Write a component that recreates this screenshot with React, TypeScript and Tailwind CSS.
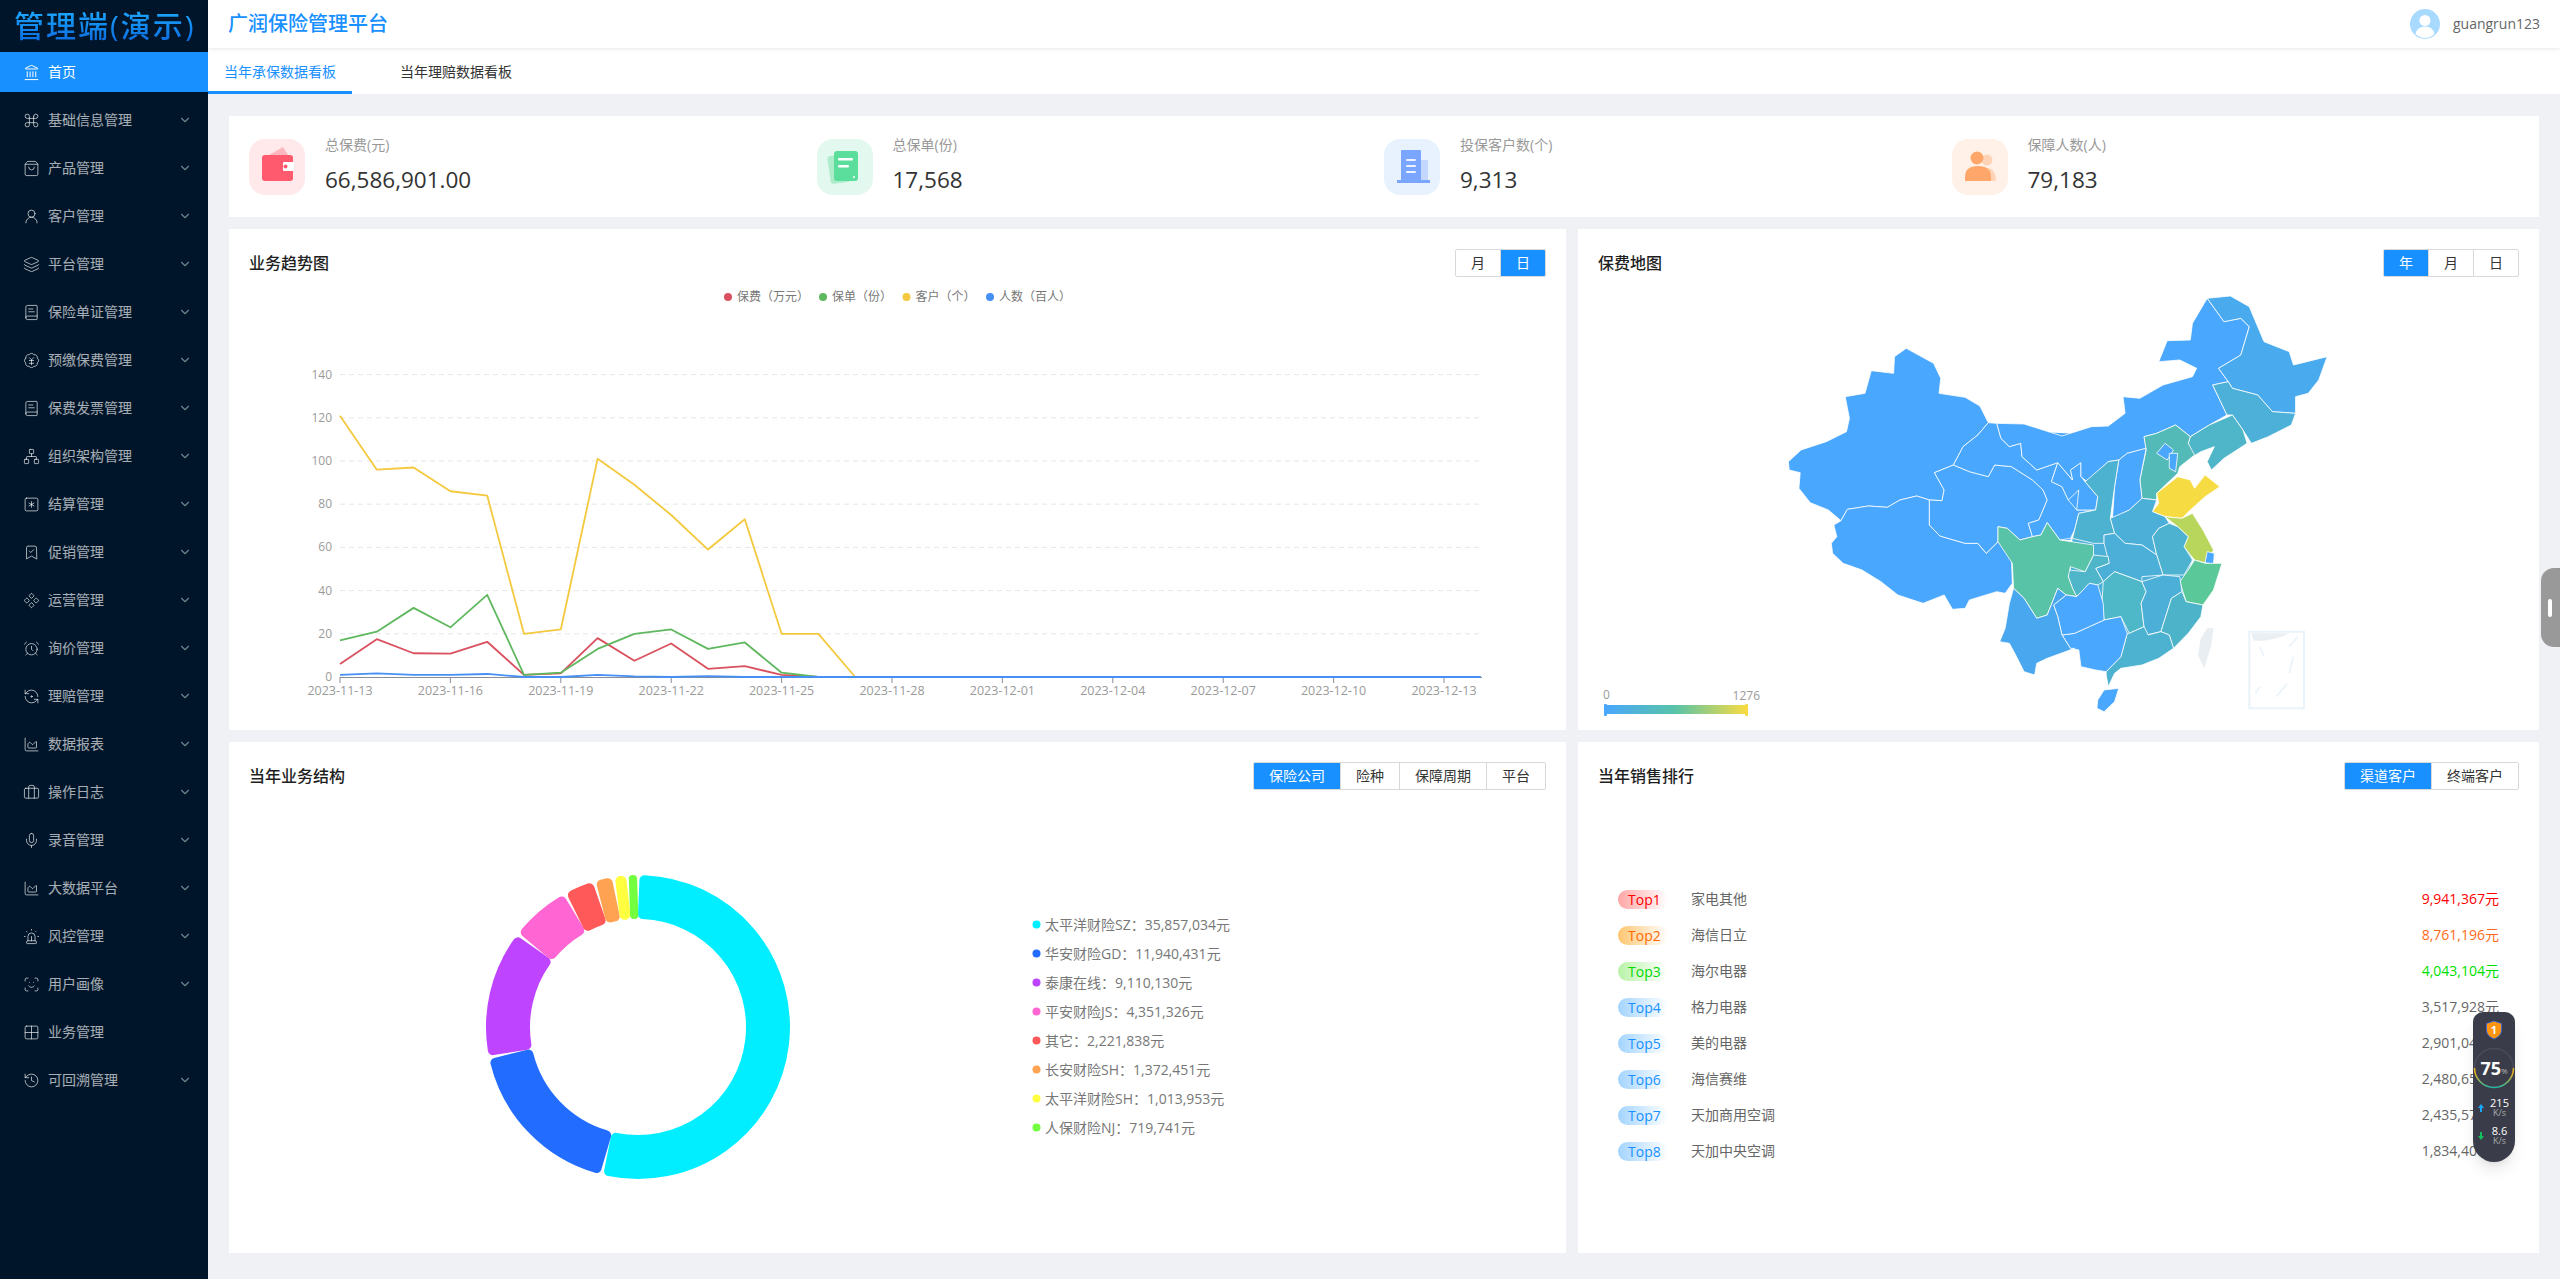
import React from 'react';
import {
  Landmark, Command, ShoppingBag, UserRound, Layers, BookText, BadgeJapaneseYen, Network,
  SquareAsterisk, BookmarkCheck, Component, AlarmClock, RefreshCcwDot, ChartArea, Briefcase,
  Mic, Siren, ScanFace, Grid2x2, History, ChevronDown,
} from 'lucide-react';

const menus = [
  { icon: Command, label: '基础信息管理' },
  { icon: ShoppingBag, label: '产品管理' },
  { icon: UserRound, label: '客户管理' },
  { icon: Layers, label: '平台管理' },
  { icon: BookText, label: '保险单证管理' },
  { icon: BadgeJapaneseYen, label: '预缴保费管理' },
  { icon: BookText, label: '保费发票管理' },
  { icon: Network, label: '组织架构管理' },
  { icon: SquareAsterisk, label: '结算管理' },
  { icon: BookmarkCheck, label: '促销管理' },
  { icon: Component, label: '运营管理' },
  { icon: AlarmClock, label: '询价管理' },
  { icon: RefreshCcwDot, label: '理赔管理' },
  { icon: ChartArea, label: '数据报表' },
  { icon: Briefcase, label: '操作日志' },
  { icon: Mic, label: '录音管理' },
  { icon: ChartArea, label: '大数据平台' },
  { icon: Siren, label: '风控管理' },
  { icon: ScanFace, label: '用户画像' },
  { icon: Grid2x2, label: '业务管理', noArrow: true },
  { icon: History, label: '可回溯管理' },
];

const Sidebar = () => (
  <aside className="w-[208px] shrink-0 bg-[#001529] flex flex-col">
    <div className="h-[52px] pl-[14px] flex items-center">
      <span className="text-[30px] leading-none font-medium tracking-[2px] whitespace-nowrap bg-linear-to-b from-[#1ea7ff] to-[#0f6de0] bg-clip-text text-transparent">
        管理端(演示)
      </span>
    </div>
    <div className="h-10 mb-2 bg-[#1890ff] text-white flex items-center pl-[23px] text-sm">
      <Landmark size={17} strokeWidth={1.4} className="mr-2" />
      首页
    </div>
    {menus.map((m) => {
      const Icon = m.icon;
      return (
        <div key={m.label} className="h-10 mb-2 shrink-0 flex items-center pl-[23px] pr-4 text-sm text-white/65">
          <Icon size={17} strokeWidth={1.4} className="mr-2" />
          <span className="flex-1">{m.label}</span>
          {!m.noArrow && <ChevronDown size={14} strokeWidth={2} className="opacity-70" />}
        </div>
      );
    })}
  </aside>
);

const Wallet = () => (
  <svg width="56" height="56" viewBox="0 0 56 56">
    <path d="M20 16 L34 8 L39 16 Z" fill="#ffb7bf" />
    <rect x="13" y="16" width="31" height="26" rx="3" fill="#ff5a6e" />
    <rect x="34" y="23" width="11" height="9" rx="1" fill="#fff" />
    <circle cx="36.5" cy="27.5" r="2" fill="#ff5a6e" />
  </svg>
);
const Policy = () => (
  <svg width="56" height="56" viewBox="0 0 56 56">
    <rect x="12" y="16" width="20" height="28" rx="3" fill="#aeeccb" transform="rotate(-8 22 30)" />
    <rect x="17" y="12" width="24" height="30" rx="3" fill="#5bdd9c" />
    <rect x="21" y="19" width="15" height="2.5" rx="1" fill="#fff" />
    <rect x="21" y="26" width="11" height="2.5" rx="1" fill="#fff" />
    <circle cx="37" cy="38" r="1" fill="#fff" />
  </svg>
);
const Building = () => (
  <svg width="56" height="56" viewBox="0 0 56 56">
    <rect x="37" y="21" width="7" height="21" fill="#c4d8ff" />
    <rect x="17" y="11" width="20" height="31" rx="1" fill="#7aa6ff" />
    <rect x="13" y="41" width="33" height="3" fill="#7aa6ff" />
    <rect x="22" y="20" width="10" height="2" rx="1" fill="#eef4ff" />
    <rect x="22" y="26" width="10" height="2" rx="1" fill="#eef4ff" />
    <rect x="22" y="32" width="10" height="2" rx="1" fill="#eef4ff" />
  </svg>
);
const People = () => (
  <svg width="56" height="56" viewBox="0 0 56 56">
    <circle cx="35" cy="21" r="5.5" fill="#ffd3b5" />
    <path d="M30 29 H37 Q44 31 44 42 H30 Z" fill="#ffd3b5" />
    <circle cx="25" cy="19" r="6.5" fill="#ffa76b" />
    <path d="M13 42 V38 Q13 27 26 27 Q39 27 39 38 V42 Z" fill="#ffa76b" />
  </svg>
);

const stats = [
  { icon: <Wallet />, bg: 'bg-[#ffe9ea]', label: '总保费(元)', value: '66,586,901.00' },
  { icon: <Policy />, bg: 'bg-[#e3f8ee]', label: '总保单(份)', value: '17,568' },
  { icon: <Building />, bg: 'bg-[#e8f2ff]', label: '投保客户数(个)', value: '9,313' },
  { icon: <People />, bg: 'bg-[#fff1e8]', label: '保障人数(人)', value: '79,183' },
];

const Buttons = ({ items, active }: { items: string[]; active: number }) => (
  <div className="flex h-7 text-sm">
    {items.map((t, i) => (
      <div
        key={t}
        className={
          'h-7 min-w-[45px] px-[15px] flex items-center justify-center border border-[#d9d9d9] -ml-px first:ml-0 first:rounded-l-[2px] last:rounded-r-[2px] ' +
          (i === active ? 'bg-[#1890ff] border-[#1890ff] text-white' : 'bg-white text-[#333]')
        }
      >
        {t}
      </div>
    ))}
  </div>
);

const Card = ({ title, right, children }: { title: string; right: React.ReactNode; children: React.ReactNode }) => (
  <section className="bg-white flex flex-col min-h-0">
    <div className="h-[50px] shrink-0 pt-5 pl-5 pr-5 flex justify-between">
      <h3 className="h-7 leading-7 text-base font-medium text-[#1f1f1f]">{title}</h3>
      {right}
    </div>
    {children}
  </section>
);

const axisY = (v: number) => 677 - v * 2.16;
const axisX = (i: number) => 340 + i * 36.8;
const pad = (a: number[]) => [...a, ...Array(32 - a.length).fill(0)];
const series = [
  { color: '#d9515e', data: pad([6, 17.5, 11, 10.8, 16.3, 1, 1.7, 18, 7.5, 15.5, 3.8, 5, 1]) },
  { color: '#5fb85f', data: pad([17, 21, 32, 23, 38, 1, 2, 13, 20, 22, 13, 16, 2]) },
  { color: '#f4c93f', data: pad([121, 96, 97, 86, 84, 20, 22, 101, 89, 75, 59, 73, 20, 20]) },
  { color: '#4690f5', data: pad([1, 1.7, 1, 1, 1.4, 0, 0, 1, 0.3, 0, 0.4, 0]) },
];
const xLabels = ['2023-11-13', '2023-11-16', '2023-11-19', '2023-11-22', '2023-11-25', '2023-11-28', '2023-12-01', '2023-12-04', '2023-12-07', '2023-12-10', '2023-12-13'];
const legend = [
  { c: '#d9515e', t: '保费（万元）', dot: 728 },
  { c: '#5fb85f', t: '保单（份）', dot: 823 },
  { c: '#f4c93f', t: '客户（个）', dot: 906.5 },
  { c: '#4690f5', t: '人数（百人）', dot: 990 },
];

const TrendChart = () => (
  <svg viewBox="229 279 1337 451" className="block w-[1337px] h-[451px]" fontFamily="Open Sans, Noto Sans CJK SC, sans-serif">
    {legend.map((l) => (
      <g key={l.t}>
        <circle cx={l.dot} cy={297} r={4} fill={l.c} />
        <text x={l.dot + 9} y={301} fontSize={12} fill="#777">{l.t}</text>
      </g>
    ))}
    {[0, 20, 40, 60, 80, 100, 120, 140].map((v) => (
      <g key={v}>
        {v > 0 && <line x1={340} x2={1482} y1={axisY(v)} y2={axisY(v)} stroke="#e3e6ec" strokeDasharray="5 4" />}
        <text x={332} y={axisY(v) + 4} textAnchor="end" fontSize={12} fill="#9a9a9a">{v}</text>
      </g>
    ))}
    <line x1={340} x2={1482} y1={677.5} y2={677.5} stroke="#8a8d96" />
    {xLabels.map((t, i) => (
      <g key={t}>
        <line x1={axisX(i * 3)} x2={axisX(i * 3)} y1={677} y2={683} stroke="#8a8d96" />
        <text x={axisX(i * 3)} y={695} textAnchor="middle" fontSize={12.5} fill="#9a9a9a">{t}</text>
      </g>
    ))}
    {series.map((s) => (
      <polyline
        key={s.color}
        fill="none"
        stroke={s.color}
        strokeWidth={1.8}
        strokeLinejoin="round"
        points={s.data.map((v, i) => `${axisX(i)},${axisY(v)}`).join(' ')}
      />
    ))}
  </svg>
);

// base fills first so the hand-traced provinces leave no holes between them
const mapBase: { c: string; p: string }[] = [
  { c: '#49a7fd', p: '610,560 915,610 945,650 900,700 880,780 855,780 790,770 700,760 560,640' },
  { c: '#49a7fd', p: '700,450 1050,470 1050,520 980,560 905,600 850,560 760,500' },
  { c: '#4cb0d8', p: '885,775 975,715 1050,660 1085,700 1140,760 1170,840 1150,900 1150,960 1100,1060 1000,1150 950,1165 900,1100 860,1060 850,960 880,880' },
];

const provinces: { c: string; p: string }[] = [
  { c: '#49a7fd', p: '210,545 240,510 300,485 348,455 355,415 345,350 392,340 407,272 460,280 462,230 490,205 555,250 572,295 568,340 630,352 665,378 685,428 660,465 625,500 602,555 557,578 580,630 575,662 545,660 515,648 475,660 445,682 400,678 350,688 335,722 305,690 262,668 235,625 238,578 212,570' },
  { c: '#49a7fd', p: '335,722 350,688 400,678 445,682 475,660 515,648 545,660 545,735 570,768 630,790 660,790 680,820 708,785 740,830 742,910 725,940 705,935 640,960 630,985 600,988 580,945 530,970 470,945 430,905 385,870 340,850 315,820 312,790 325,770 318,735' },
  { c: '#49a7fd', p: '557,578 602,555 640,575 685,590 700,555 740,560 790,600 815,630 825,660 805,720 780,730 790,770 760,780 730,745 708,740 708,785 680,820 660,790 630,790 570,768 545,735 545,660 575,662 580,630' },
  { c: '#49a7fd', p: '602,555 625,500 660,465 685,428 705,430 715,475 735,500 762,490 765,530 800,570 850,548 835,605 860,620 875,660 895,690 940,690 900,700 890,750 880,775 855,780 825,728 810,765 790,770 780,730 805,720 825,660 815,630 790,600 740,560 700,555 685,590 640,575' },
  { c: '#49a7fd', p: '835,605 850,548 885,600 880,570 905,548 905,590 915,605 945,650 940,690 895,690 900,630 875,660 860,620' },
  { c: '#49a7fd', p: '705,430 770,432 860,468 930,440 970,438 1010,400 1005,350 1045,355 1100,315 1170,290 1180,265 1140,240 1090,245 1110,182 1165,180 1170,130 1205,55 1245,125 1285,115 1305,140 1285,225 1232,265 1255,305 1218,315 1252,405 1210,435 1165,470 1130,435 1085,460 1055,470 1060,505 1015,520 995,540 970,545 920,605 905,590 905,548 880,570 885,600 850,548 800,570 765,530 762,490 735,500 715,475' },
  { c: '#49aaee', p: '1205,55 1260,48 1305,80 1340,185 1400,215 1410,255 1490,230 1470,300 1445,340 1415,350 1415,400 1360,395 1325,345 1265,325 1255,305 1232,265 1285,225 1305,140 1285,115 1245,125' },
  { c: '#4cb0d8', p: '1218,315 1255,305 1265,325 1325,345 1360,395 1415,400 1405,435 1350,470 1310,490 1290,450 1265,405 1252,405' },
  { c: '#4fb5c8', p: '1165,470 1210,435 1265,405 1290,450 1300,490 1245,535 1215,570 1205,545 1222,500 1190,515 1170,530 1160,490' },
  { c: '#53bab8', p: '1055,470 1085,460 1130,435 1165,470 1160,490 1175,525 1140,560 1135,580 1085,640 1085,660 1050,655 1045,600 1060,510' },
  { c: '#49a7fd', p: '1085,520 1105,490 1125,510 1110,540' },
  { c: '#49a7fd', p: '1115,520 1135,520 1130,575 1115,565' },
  { c: '#49a7fd', p: '1060,505 1045,600 1050,655 1020,690 980,715 985,620 995,540 1015,520' },
  { c: '#4db2cf', p: '970,545 995,540 985,620 975,715 985,760 960,765 960,790 935,790 885,775 900,700 940,690 945,650 915,605' },
  { c: '#f7db43', p: '1085,640 1135,590 1165,600 1175,625 1200,585 1235,620 1200,650 1165,690 1145,715 1105,710 1075,695 1090,670' },
  { c: '#4cafd8', p: '1050,655 1085,660 1075,695 1105,710 1115,730 1090,745 1075,770 1085,825 1050,795 1010,790 985,760 975,715 1020,690' },
  { c: '#b9d65c', p: '1105,710 1145,715 1170,700 1195,750 1220,810 1205,850 1175,840 1150,800 1160,770 1135,740' },
  { c: '#49a7fd', p: '1205,815 1222,820 1220,852 1200,848' },
  { c: '#4db2cf', p: '1115,730 1135,740 1160,770 1150,800 1170,840 1150,885 1100,885 1085,825 1075,770 1090,745' },
  { c: '#5ac898', p: '1175,840 1200,850 1240,850 1220,930 1195,975 1155,965 1140,905 1160,870' },
  { c: '#4cafd8', p: '960,765 985,760 1010,790 1050,795 1085,825 1100,885 1050,890 1050,905 985,875 958,905 940,865 972,850 960,790' },
  { c: '#4fb5c8', p: '875,870 915,875 935,825 970,830 972,850 940,865 958,905 945,915 925,910 895,950 885,925 875,890' },
  { c: '#59c3a7', p: '708,740 730,745 760,780 790,770 810,765 825,728 855,780 935,795 935,825 915,875 880,860 875,890 885,925 895,950 870,945 850,925 825,1005 800,1015 770,955 745,925 742,850 708,785' },
  { c: '#4fb8c8', p: '958,905 985,875 1050,905 1060,935 1048,970 1055,1040 1020,1060 1000,1010 960,1020 955,970' },
  { c: '#4cafd8', p: '1050,905 1100,885 1140,890 1145,935 1120,955 1095,1055 1060,1065 1055,1040 1048,970 1060,935' },
  { c: '#4db3c8', p: '1145,935 1155,965 1195,975 1190,1010 1160,1060 1125,1105 1115,1065 1095,1055 1120,955' },
  { c: '#4cb2d0', p: '1020,1060 1055,1040 1065,1065 1095,1055 1115,1065 1125,1105 1090,1135 1050,1155 1000,1165 985,1180 970,1220 965,1185 965,1175 1000,1130 1015,1060' },
  { c: '#49a7fd', p: '860,1065 890,1060 925,1040 960,1020 1000,1010 1015,1060 1000,1130 965,1175 940,1170 905,1160 900,1110 880,1105' },
  { c: '#49a7fd', p: '840,975 870,945 895,950 925,910 945,915 958,970 960,1020 925,1040 890,1060 860,1065 850,1010' },
  { c: '#49a7f0', p: '745,925 770,955 800,1015 825,1005 850,925 870,945 840,975 850,1010 860,1065 880,1105 890,1105 825,1135 800,1150 795,1185 770,1175 750,1125 735,1090 712,1085 725,1045 735,970' },
  { c: '#49a7fd', p: '945,1260 960,1230 995,1225 985,1265 960,1295 943,1285' },
];

const ChinaMap = () => (
  <svg viewBox="1578 279 961 451" className="block w-[961px] h-[451px]" fontFamily="Open Sans, Noto Sans CJK SC, sans-serif">
    <defs>
      <linearGradient id="vm" x1="0" x2="1" y1="0" y2="0">
        <stop offset="0" stopColor="#49a7fd" />
        <stop offset="0.5" stopColor="#59c3a7" />
        <stop offset="1" stopColor="#f7db43" />
      </linearGradient>
    </defs>
    <g transform="translate(1700 280) scale(0.4209 0.33333)">
      {mapBase.map((d, i) => (
        <polygon key={i} points={d.p} fill={d.c} />
      ))}
      {provinces.map((d, i) => (
        <polygon key={i} points={d.p} fill={d.c} stroke="#fff" strokeWidth={0.8} strokeLinejoin="round" vectorEffect="non-scaling-stroke" />
      ))}
      <polygon points="1205,1045 1220,1045 1215,1095 1198,1165 1183,1125 1190,1075" fill="#e8eef2" />
      <rect x="1305" y="1055" width="130" height="230" fill="none" stroke="#eaf3f9" strokeWidth={2} vectorEffect="non-scaling-stroke" />
      <path d="M1310 1060 H1400 Q1360 1085 1315 1082 Z" fill="#eaeff3" />
      <path d="M1330 1100 L1340 1130 M1420 1070 L1400 1100 M1410 1130 L1400 1180 M1330 1220 L1320 1240 M1395 1210 L1370 1250" stroke="#eef5fa" strokeWidth={2} vectorEffect="non-scaling-stroke" />
    </g>
    <text x={1603} y={699} fontSize={12} fill="#999">0</text>
    <text x={1760} y={700} textAnchor="end" fontSize={12} fill="#999">1276</text>
    <rect x={1605} y={705} width={141} height={9} fill="url(#vm)" />
    <rect x={1604} y={704} width={3} height={12} rx={1} fill="#49a7fd" />
    <rect x={1745} y={704} width={3} height={12} rx={1} fill="#f7db43" />
  </svg>
);

const pieData = [
  { c: '#00eeff', t: '太平洋财险SZ', v: 35857034 },
  { c: '#226dff', t: '华安财险GD', v: 11940431 },
  { c: '#bf44ff', t: '泰康在线', v: 9110130 },
  { c: '#ff66d3', t: '平安财险JS', v: 4351326 },
  { c: '#ff5959', t: '其它', v: 2221838 },
  { c: '#ffa352', t: '长安财险SH', v: 1372451 },
  { c: '#ffff40', t: '太平洋财险SH', v: 1013953 },
  { c: '#73ff40', t: '人保财险NJ', v: 719741 },
];
const pieTotal = pieData.reduce((a, b) => a + b.v, 0);
const polar = (r: number, deg: number) => {
  const a = (deg * Math.PI) / 180;
  return `${(638 + r * Math.sin(a)).toFixed(2)} ${(1028 - r * Math.cos(a)).toFixed(2)}`;
};
const sector = (start: number, sweep: number) => {
  const widthAtMid = (sweep * Math.PI * 130) / 180;
  const hs = Math.min(5, widthAtMid / 2 - 0.5);
  const ro = 152 - hs;
  const ri = 108 + hs;
  const inset = (((hs + 0.7) / 130) * 180) / Math.PI;
  const a0 = start + inset;
  const a1 = start + sweep - inset;
  const large = a1 - a0 > 180 ? 1 : 0;
  return {
    d: `M${polar(ro, a0)} A${ro} ${ro} 0 ${large} 1 ${polar(ro, a1)} L${polar(ri, a1)} A${ri} ${ri} 0 ${large} 0 ${polar(ri, a0)} Z`,
    sw: hs * 2,
  };
};

const Donut = () => {
  let angle = 0;
  return (
    <svg viewBox="229 793 1337 461" className="block w-[1337px] h-[461px]" fontFamily="Open Sans, Noto Sans CJK SC, sans-serif">
      {pieData.map((d) => {
        const sweep = (d.v / pieTotal) * 360;
        const s = sector(angle, sweep);
        angle += sweep;
        return <path key={d.t} d={s.d} fill={d.c} stroke={d.c} strokeWidth={s.sw} strokeLinejoin="round" />;
      })}
      {pieData.map((d, i) => (
        <g key={d.t}>
          <circle cx={1036.5} cy={925.5 + i * 29} r={4} fill={d.c} />
          <text x={1045} y={930.5 + i * 29} fontSize={14} fill="#777">
            {d.t}：{d.v.toLocaleString('en-US')}元
          </text>
        </g>
      ))}
    </svg>
  );
};

const blueRank = { pill: 'from-[#a3d4ff]', text: 'text-[#1890ff]', value: 'text-[#666]' };
const ranks = [
  { name: '家电其他', value: '9,941,367元', pill: 'from-[#ffa6a6]', text: 'text-[#ff0000]', valueC: 'text-[#ff0000]' },
  { name: '海信日立', value: '8,761,196元', pill: 'from-[#ffc56e]', text: 'text-[#ff6a00]', valueC: 'text-[#ff6a1a]' },
  { name: '海尔电器', value: '4,043,104元', pill: 'from-[#b8f2a8]', text: 'text-[#00d800]', valueC: 'text-[#00e000]' },
  { name: '格力电器', value: '3,517,928元', pill: blueRank.pill, text: blueRank.text, valueC: blueRank.value },
  { name: '美的电器', value: '2,901,041元', pill: blueRank.pill, text: blueRank.text, valueC: blueRank.value },
  { name: '海信赛维', value: '2,480,650元', pill: blueRank.pill, text: blueRank.text, valueC: blueRank.value },
  { name: '天加商用空调', value: '2,435,576元', pill: blueRank.pill, text: blueRank.text, valueC: blueRank.value },
  { name: '天加中央空调', value: '1,834,401元', pill: blueRank.pill, text: blueRank.text, valueC: blueRank.value },
];

const RankList = () => (
  <div className="mt-[89px] px-10 flex flex-col text-sm">
    {ranks.map((r, i) => (
      <div key={r.name} className="h-9 flex items-center">
        <div className={'w-[50px] h-[19px] rounded-full pl-[10px] leading-[19px] bg-linear-to-r to-white ' + r.pill + ' ' + r.text}>
          Top{i + 1}
        </div>
        <div className="ml-[23px] flex-1 text-[#666]">{r.name}</div>
        <div className={r.valueC}>{r.value}</div>
      </div>
    ))}
  </div>
);

const SpeedWidget = () => (
  <div className="absolute left-[2265px] top-[1012px] w-[42px] h-[150px] rounded-t-[10px] rounded-b-[21px] bg-[#3a3d49] shadow-lg text-white flex flex-col items-center">
    <svg width="18" height="20" viewBox="0 0 18 20" className="mt-[8px]">
      <path d="M9 1 L16.5 3.5 V10 Q16.5 16 9 19 Q1.5 16 1.5 10 V3.5 Z" fill="#ff9410" stroke="#3f66c8" strokeWidth="1" />
      <text x="9" y="14" textAnchor="middle" fontSize="11" fontWeight="700" fill="#fff" fontFamily="Open Sans, sans-serif">1</text>
    </svg>
    <div className="relative mt-[7px] w-[42px] h-[42px] flex items-center justify-center">
      <svg width="42" height="42" viewBox="0 0 42 42" className="absolute inset-0">
        <defs>
          <linearGradient id="ring" x1="0" x2="0" y1="0" y2="1">
            <stop offset="0.3" stopColor="#e8b01f" />
            <stop offset="1" stopColor="#25b8a0" />
          </linearGradient>
        </defs>
        <circle cx="21" cy="21" r="19.5" fill="none" stroke="#4a4d59" strokeWidth="1.5" />
        <path d="M1.5 21 A19.5 19.5 0 1 0 40.5 21" fill="none" stroke="url(#ring)" strokeWidth="1.5" />
      </svg>
      <span className="text-[18px] font-bold leading-none">75</span>
      <span className="text-[8px] text-[#bbb] mt-[5px]">%</span>
    </div>
    <div className="mt-[9px] pl-[5px] w-full flex items-center">
      <svg width="6" height="8" viewBox="0 0 6 8"><path d="M3 0 L6 4 H4 V8 H2 V4 H0 Z" fill="#16a8ff" /></svg>
      <div className="flex-1 text-center leading-[10px]">
        <div className="text-[11px]">215</div>
        <div className="text-[9px] text-[#aaa]">K/s</div>
      </div>
    </div>
    <div className="mt-[8px] pl-[5px] w-full flex items-center">
      <svg width="6" height="8" viewBox="0 0 6 8"><path d="M3 8 L6 4 H4 V0 H2 V4 H0 Z" fill="#10c060" /></svg>
      <div className="flex-1 text-center leading-[10px]">
        <div className="text-[11px]">8.6</div>
        <div className="text-[9px] text-[#aaa]">K/s</div>
      </div>
    </div>
  </div>
);

const App = () => {
  return (
    <div className="flex w-full h-[1279px] overflow-hidden font-['Open_Sans','Noto_Sans_CJK_SC',sans-serif]">
      <Sidebar />
      <main className="relative flex-1 bg-[#f0f1f5] flex flex-col min-w-0">
        <header className="h-12 shrink-0 bg-white shadow-[0_1px_4px_rgba(0,21,41,0.1)] z-10 flex items-center justify-between pl-5 pr-5">
          <div className="text-xl font-medium text-[#1890ff]">广润保险管理平台</div>
          <div className="flex items-center text-sm text-[#666]">
            <svg width="30" height="30" viewBox="0 0 30 30" className="mr-[13px]">
              <circle cx="15" cy="15" r="15" fill="#a8daff" />
              <circle cx="15" cy="11.5" r="5.5" fill="#fff" />
              <path d="M5.5 25 Q7 17.5 15 17.5 Q23 17.5 24.5 25 Q20 29 15 29 Q10 29 5.5 25 Z" fill="#fff" />
            </svg>
            guangrun123
          </div>
        </header>
        <nav className="h-[46px] shrink-0 bg-white flex text-sm">
          <div className="w-[144px] pt-[14px] text-center text-[#1890ff] border-b-[3px] border-[#1890ff]">当年承保数据看板</div>
          <div className="ml-12 pt-[14px] text-[#333]">当年理赔数据看板</div>
        </nav>
        <div className="pt-[22px] pl-[21px] flex flex-col gap-3 w-[2331px]">
          <div className="h-[101px] bg-white px-5 grid grid-cols-4 items-center">
            {stats.map((s) => (
              <div key={s.label} className="flex items-center">
                <div className={'w-14 h-14 rounded-2xl ' + s.bg}>{s.icon}</div>
                <div className="ml-5">
                  <div className="text-sm text-[#999] leading-5 -mt-[3px]">{s.label}</div>
                  <div className="text-[22.5px] text-[#333] leading-[30px] mt-[10px]">{s.value}</div>
                </div>
              </div>
            ))}
          </div>
          <div className="grid grid-cols-[1337px_961px] grid-rows-[501px_511px] gap-3">
            <Card title="业务趋势图" right={<Buttons items={['月', '日']} active={1} />}>
              <TrendChart />
            </Card>
            <Card title="保费地图" right={<Buttons items={['年', '月', '日']} active={0} />}>
              <ChinaMap />
            </Card>
            <Card title="当年业务结构" right={<Buttons items={['保险公司', '险种', '保障周期', '平台']} active={0} />}>
              <Donut />
            </Card>
            <Card title="当年销售排行" right={<Buttons items={['渠道客户', '终端客户']} active={0} />}>
              <RankList />
            </Card>
          </div>
        </div>
        <SpeedWidget />
        <div className="absolute right-0 top-[568px] w-[19px] h-[79px] rounded-l-[13px] bg-[#999] flex items-center pl-[7px]">
          <div className="w-1 h-[18px] rounded-full bg-white" />
        </div>
      </main>
    </div>
  );
};

export default App;
